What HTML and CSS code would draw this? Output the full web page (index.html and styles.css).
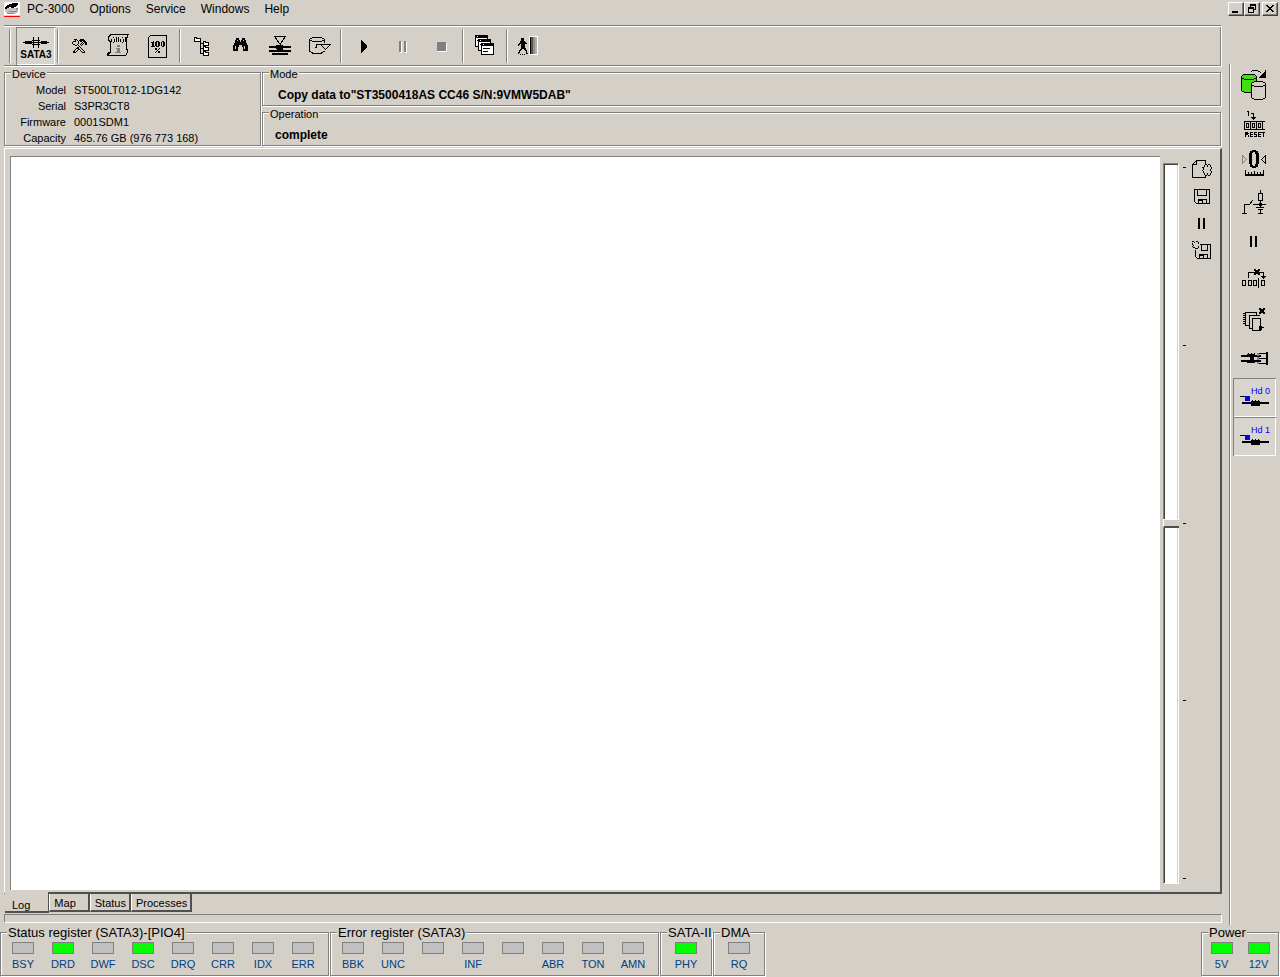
FILE: index.html
```html
<!DOCTYPE html>
<html lang="en">
<head>
<meta charset="utf-8">
<title>PC-3000</title>
<link rel="stylesheet" href="styles.css">
</head>
<body>
<header class="menubar">
  <svg class="app-icon" width="16" height="16" viewBox="0 0 16 16"><path fill="#fff" d="M0 0h16v13H0z"/><path fill="#c4c4c4" d="M1 6h13v4l-3 2H3L1 10z"/><path fill="#888" d="M5 9h8v1H5zM3 11h7v1H3zM12 6h2v2h-2z"/><path d="M1 7V5h1V4h1V3h2V2h3V1h6v2h-1v1h-1v1h-2v1H7V5H5v1H3v1z"/><path fill="red" d="M0 14h16v1H0z"/></svg>
  <nav class="menus" aria-label="Main menu">
    <button>PC-3000</button><button>Options</button><button>Service</button><button>Windows</button><button>Help</button>
  </nav>
  <div class="window-buttons">
    <button aria-label="Minimize"><svg width="12" height="10" viewBox="0 0 12 10"><path d="M2 7h6v2H2z"/></svg></button>
    <button aria-label="Restore"><svg width="12" height="10" viewBox="0 0 12 10"><path d="M4 0h6v6H8V5h1V2H5v1H4zM2 3h6v6H2zM3 5v3h4V5z" fill-rule="evenodd"/></svg></button>
    <button aria-label="Close"><svg width="12" height="10" viewBox="0 0 12 10"><path d="M2 1h2v1h1v1h2V2h1V1h2v1H9v1H8v1H7v1h1v1h1v1h1v1H8V7H7V6H5v1H4v1H2V7h1V6h1V5h1V4H4V3H3V2H2z"/></svg></button>
  </div>
</header>

<div class="workspace">
  <main class="main">
    <div class="toolbar" role="toolbar" aria-label="Tools">
      <span class="sep handle"></span>
      <button class="tool pressed" aria-label="SATA3"><svg viewBox="16 27 39 38"><path d="M23 42h26v1H23zM25 41h7v3h-7zM41 41h6v3h-6zM33 37h1v11h-1zM38 37h1v11h-1zM32 40h8v1h-8zM32 44h8v1h-8z"/><text class="sata-text" x="36" y="58">SATA3</text></svg></button>
      <span class="sep"></span>
      <button class="tool" aria-label="Utilities"><svg viewBox="60 27 39 38"><path d="M74 39h3v1h-3zM77 40h1v1h-1zM78 41h1v3h-1zM72 42h1v2h-1zM73 44h2v1h-2zM73 41h2v1h-2zM75 40h1v2h-1zM75 45h2v1h-2zM77 44h1v1h-1zM80 39h4v1h-4zM79 40h6v1h-6zM80 41h2v1h-2zM83 41h3v1h-3zM84 42h3v1h-3zM85 43h2v2h-2zM78 45h1v1h-1zM79 46h1v1h-1zM80 47h1v1h-1zM81 48h1v1h-1zM82 49h1v1h-1zM83 50h1v1h-1zM84 51h1v2h-1zM82 52h2v1h-2zM81 51h1v1h-1zM80 50h1v1h-1zM79 49h1v1h-1zM77 47h2v2h-2zM82 42h1v1h-1zM81 43h1v1h-1zM80 44h1v1h-1zM83 43h1v1h-1zM82 44h1v1h-1zM81 45h1v1h-1zM76 48h1v1h-1zM75 49h1v1h-1zM74 50h1v1h-1zM73 51h2v2h-2zM75 52h1v1h-1zM76 51h1v1h-1zM77 50h1v1h-1zM78 49h1v1h-1z"/></svg></button>
      <button class="tool" aria-label="Resources"><svg viewBox="99 27 39 38"><path class="ln" d="M128.500 34.500h-17l-2 1-1 2v3l2 1v10l-1 2-2 1v1h18l2-3v-2l-1-2V39l1-3zM107.500 54.500l1-2M110.500 55.500h14"/><path class="ln" d="M111.500 38.500v3m1-4h1m1 1v3m-2 1h1M116.500 37v5M118.500 37v5M120.500 38.500v3m1-4h1m1 1v3m-2 1h1M125.500 37v5"/><path fill="#808080" d="M117 45h3v2h-3zM116 48h4v4h1v1h-6v-1h2v-3h-1z"/></svg></button>
      <button class="tool" aria-label="Percent test"><svg viewBox="138 27 39 38"><path class="ln" d="M150.500 35.500h16v22h-18v-20z"/><path d="M151 42h2v-1h1v5h1v1h-4v-1h1v-3h-1zM156 41h3v1h1v4h-1v1h-3v-1h-1v-4h1zM157 42v4h1v-4zM162 41h2v1h1v4h-1v1h-2v-1h-1v-4h1zM162 42v4h1v-4zM155 48h2v2h-2zM159 48h1v1h-1v1h-1v1h-1v1h-1v1h-1v-1h1v-1h1v-1h1v-1h1zM158 51h2v2h-2z" fill-rule="evenodd"/></svg></button>
      <span class="sep"></span>
      <button class="tool" aria-label="Tree"><svg viewBox="182 27 39 38"><path fill="#fff" class="ln2" d="M194.500 41.500v-4h2v1h4v3zM203.500 45.500v-4h2v1h3v3zM203.500 50.500v-4h2v1h3v3zM203.500 55.500v-4h2v1h3v3z"/><path class="ln" d="M200.500 41.500v12h3M200.500 43.500h3M200.500 48.500h3"/></svg></button>
      <button class="tool" aria-label="Search"><svg viewBox="221 27 39 38"><path d="M236 38h3v2h1v2h1v-2h1v-2h3v2h1v3h1v2h1v6h-5v-4h-1v-2h-3v2h-1v4h-5v-6h1v-2h1v-3h1z"/><path fill="#d4d0c8" d="M237 40h1v1h-1zM243 40h1v1h-1zM235 46h1v3h-1zM244 46h1v3h-1z"/></svg></button>
      <button class="tool" aria-label="Filter"><svg viewBox="260 27 39 38"><path class="ln" d="M274.500 36.500h11l-5 7h-1zM280 43v4"/><path d="M269 46h22v2h-22zM269 50h22v2h-22zM272 53h16v2h-16zM276 45h7v4h-7zM277 48h6v3h-6z"/><path fill="#d4d0c8" d="M272 49h5v1h-5zM283 49h5v1h-5z"/></svg></button>
      <button class="tool" aria-label="Copy drive"><svg viewBox="299 27 39 38"><path class="ln" d="M309.500 39.500l3-2h9l3 2-3 2h-9zM309.500 40v11l3 2h9l3-2M324.500 40v3M316.500 44.500h5M316.500 44v3M316.500 47.500h-2M320.500 44.500h10l-5 5-5-5"/></svg></button>
      <span class="sep"></span>
      <button class="tool" aria-label="Start"><svg viewBox="343 27 39 38"><path d="M361 40h1v1h1v1h1v1h1v1h1v1h1v3h-1v1h-1v1h-1v1h-1v1h-1v1h-1z"/></svg></button>
      <button class="tool" aria-label="Pause" disabled><svg viewBox="382 27 39 38"><path fill="#fff" d="M400 42h2v11h-2zM405 42h2v11h-2z"/><path fill="#808080" d="M399 41h2v11h-2zM404 41h2v11h-2z"/></svg></button>
      <button class="tool" aria-label="Stop" disabled><svg viewBox="421 27 39 38"><path fill="#fff" d="M438 43h9v9h-9z"/><path fill="#808080" d="M437 42h9v9h-9z"/></svg></button>
      <span class="sep"></span>
      <button class="tool" aria-label="Cascade windows"><svg viewBox="465 27 39 38"><path fill="#fff" class="ln2" d="M475.500 35.500h12v11h-12z"/><path d="M475 35h13v3h-13zM477 40h2v1h-2z"/><path fill="#fff" class="ln2" d="M478.500 39.500h12v11h-12z"/><path d="M478 39h13v3h-13zM480 44h2v1h-2z"/><path fill="#fff" class="ln2" d="M481.500 43.500h12v11h-12z"/><path d="M481 43h13v3h-13zM483 48h7v1h-7zM483 51h5v1h-5z"/><path fill="#fff" d="M477 36h1v1h-1zM480 40h1v1h-1zM483 44h1v1h-1z"/></svg></button>
      <span class="sep"></span>
      <button class="tool" aria-label="Exit"><svg viewBox="509 27 39 38"><path d="M521 38h3v3h-3zM520 41h5v1h1v1h1v1h-2v4h1v2h1v3h1v1h-2v-3h-1v-1h-1v-1h-2v1h-1v1h-1v2h-1v1h-1v-2h1v-2h1v-1h1v-5h-1v1h-1v1h-1v-2h1v-1h1zM520 54h1v1h-1zM522 54h1v1h-1zM524 54h1v1h-1z"/><path fill="#fff" d="M529 36h9v19h-9z"/><path d="M530 37h1v17h-1z"/><path fill="#555" d="M531 37h2v17h-2z"/><path fill="#909090" d="M533 37h2v17h-2z"/><path fill="#b0b0b0" d="M535 37h2v17h-2z"/></svg></button>
    </div>

    <div class="info">
      <fieldset class="group device">
        <legend>Device</legend>
        <dl>
          <dt>Model</dt><dd>ST500LT012-1DG142</dd>
          <dt>Serial</dt><dd>S3PR3CT8</dd>
          <dt>Firmware</dt><dd>0001SDM1</dd>
          <dt>Capacity</dt><dd>465.76 GB (976 773 168)</dd>
        </dl>
      </fieldset>
      <fieldset class="group mode"><legend>Mode</legend><p>Copy data to"ST3500418AS CC46 S/N:9VMW5DAB"</p></fieldset>
      <fieldset class="group operation"><legend>Operation</legend><p>complete</p></fieldset>
    </div>

    <section class="panel" aria-label="Log panel">
      <div class="log" role="log"></div>
      <input class="slider" type="range" min="0" max="4" value="2" aria-label="Log detail">
      <div class="ticks"><i></i><i></i><i></i><i></i><i></i></div>
      <div class="log-tools">
        <button aria-label="New log"><svg viewBox="1190 156 24 27"><path class="ln" d="M1205.500 164v-3.500h-9l-4 4v13h13v-2M1192.500 164.500h4v-4"/><path d="M1205 164h2v1h-2zM1208 164h2v1h-2zM1204 165h1v2h-1zM1207 165h1v2h-1zM1210 165h1v2h-1zM1202 167h2v1h-2zM1211 167h1v2h-1zM1203 168h1v2h-1zM1202 170h1v1h-1zM1210 169h1v2h-1zM1203 171h1v2h-1zM1211 171h1v2h-1zM1204 173h1v2h-1zM1210 173h1v2h-1zM1205 175h2v1h-2zM1207 173h1v2h-1zM1208 175h2v1h-2z"/></svg></button>
        <button aria-label="Save log"><svg viewBox="1190 183 24 27"><path class="ln" d="M1194.500 189.500h15v14h-13l-2-2zM1197.500 190v5h9v-5M1198.500 203v-4h8v4M1199 200.500h3v2"/></svg></button>
        <button aria-label="Pause log"><svg viewBox="1190 210 24 27"><path d="M1198 218h2v11h-2zM1203 218h2v11h-2z"/></svg></button>
        <button aria-label="Save log as"><svg viewBox="1190 237 24 27"><path class="ln" d="M1199.500 244.500h11v14h-13l-2-2v-7M1201.500 245v5h6v-5M1199.500 258v-4h8v4M1200 255.500h3v2"/><path d="M1192 241h2v1h-2zM1194 242h1v1h-1zM1196 241h2v1h-2zM1198 242h1v2h-1zM1192 243h1v2h-1zM1193 245h1v1h-1zM1192 246h1v1h-1zM1193 247h2v1h-2zM1195 248h3v1h-3zM1198 246h1v2h-1z"/></svg></button>
      </div>
    </section>

    <div class="tabs" role="tablist">
      <button role="tab" aria-selected="true" class="tab active">Log</button>
      <button role="tab" class="tab">Map</button>
      <button role="tab" class="tab">Status</button>
      <button role="tab" class="tab">Processes</button>
    </div>
    <div class="progress"></div>
  </main>

  <aside class="sidebar">
    <button aria-label="Copy"><svg viewBox="1233 66 43 39"><path fill="#40e010" class="ln2" d="M1241.500 76.500l2-2h11l2 2v14l-3 2h-9l-3-2z"/><path class="ln" d="M1241.500 77.500l3 2h9l3-2M1250.500 72.500l2-2h5l3 2 1 1"/><path d="M1266 70v8h-7v-1h1v-1h1v-1h1v-1h1v-1h1v-1h1v-2z"/><path fill="#d4d0c8" class="ln2" d="M1251.500 83.500l3-2h8l3 2v14l-3 2h-8l-3-2z"/><path class="ln" d="M1251.500 84.500l3 2h8l3-2"/></svg></button>
    <button aria-label="Reset"><svg viewBox="1233 105 43 39"><path d="M1247 111h2v5h-1v-4h-1zM1251 113h3v4h2v1h-1v1h-1v1h-1v-1h-1v-1h-1v-1h2v-3h-2z"/><path class="ln" d="M1265 121.500h-20.500v8H1265M1250.500 121v9M1256.500 121v9M1262.500 121v9"/><path fill-rule="evenodd" d="M1246 123h3v5h-3zM1247 124v3h1v-3zM1252 123h3v5h-3zM1253 124v3h1v-3zM1258 123h3v5h-3zM1259 124v3h1v-3z"/><path d="M1245 132h3v1h1v1h-1v1h1v2h-1v-2h-2v2h-1zM1250 132h3v1h-2v1h2v1h-2v1h2v1h-3zM1254 132h3v1h-2v1h2v3h-3v-1h2v-1h-2zM1258 132h3v1h-2v1h2v1h-2v1h2v1h-3zM1261 132h4v1h-1v4h-1v-4h-2z"/></svg></button>
    <button aria-label="Recalibrate"><svg viewBox="1233 144 43 39"><path fill-rule="evenodd" d="M1252 150h4v1h2v2h1v11h-1v3h-2v1h-4v-1h-2v-3h-1v-11h1v-2h2zM1253 152l-1 3v8l1 3h2l1-3v-8l-1-3z"/><path d="M1245 174h19v2h-19zM1245 170h1v4h-1zM1248 172h1v2h-1zM1251 172h1v2h-1zM1254 171h1v3h-1zM1257 172h1v2h-1zM1260 172h1v2h-1zM1263 170h1v4h-1z"/><path class="ln" d="M1265.500 155.500v8l-4-4z"/><path class="ln grey" d="M1242.500 155.500v8l4-4z"/></svg></button>
    <button aria-label="Power switch"><svg viewBox="1233 183 43 39"><path class="ln" d="M1242 213.500h5M1244.500 213v-8.500h5l3-4M1253 204.500h13M1260.500 190v3M1258.500 193.500h4v7h-4zM1260.500 200v7M1256 207.500h8M1258 209.500h5M1260.500 209v5M1258 213.500h5"/><path d="M1259 203h3v3h-3z"/></svg></button>
    <button aria-label="Pause"><svg viewBox="1233 222 43 39"><path d="M1250 236h2v11h-2zM1255 236h2v11h-2z"/></svg></button>
    <button aria-label="Skip block"><svg viewBox="1233 261 43 39"><path class="ln" d="M1242.500 280.500h3v5h-3zM1248.500 280.500h3v5h-3zM1253.500 280.500h3v5h-3zM1261.500 280.500h3v5h-3zM1258.500 278v10M1248.500 278v-5.500h15v4"/><path d="M1254 269h2v1h2v-1h2v2h-1v2h1v2h-2v-1h-2v1h-2v-2h1v-2h-1zM1261 276h5v1h-1v1h-1v1h-1v-1h-1v-1h-1z"/></svg></button>
    <button aria-label="Clear heads"><svg viewBox="1233 300 43 39"><path class="ln" d="M1256 312.500h-10.500v13h3M1260 315.500h-10.500v13h3M1252.500 318.500h8v12h-8zM1256.500 312v3M1243 313.500h3M1243 315.500h3M1243 317.500h3M1243 319.500h3M1243 321.500h3M1243 323.500h3"/><path d="M1259 308h2v1h2v-1h2v2h-1v2h1v2h-2v-1h-2v1h-2v-2h1v-2h-1zM1259 326h3v1h2v1h-2v2h-3z"/></svg></button>
    <button aria-label="Head stack"><svg viewBox="1233 339 43 39"><path d="M1241 355h20v2h-20zM1241 360h20v2h-20zM1247 354h8v3h-8zM1250 356h4v6h-4zM1247 360h8v3h-8zM1248 353h1v1h-1zM1251 353h1v1h-1zM1254 353h1v1h-1zM1266 352h2v13h-2z"/><path class="ln" d="M1257 353.500h9M1257 358.500h9M1257 363.500h9"/><path fill="#808080" d="M1257 353h2v3h-2zM1257 357h2v3h-2zM1257 362h2v2h-2z"/></svg></button>
    <button class="pressed" aria-label="Head 0"><svg viewBox="1233 378 43 39"><text class="hd-text" x="1251" y="394">Hd 0</text><path d="M1240 396h5v1h-5zM1242 402h27v2h-27zM1251 401h9v5h-9zM1252 400h1v1h-1zM1255 400h1v1h-1zM1258 400h1v1h-1z"/><path fill="#00f" d="M1245 396h5v5h-5z"/></svg></button>
    <button class="pressed" aria-label="Head 1"><svg viewBox="1233 417 43 39"><text class="hd-text" x="1251" y="433">Hd 1</text><path d="M1240 435h5v1h-5zM1242 441h27v2h-27zM1251 440h9v5h-9zM1252 439h1v1h-1zM1255 439h1v1h-1zM1258 439h1v1h-1z"/><path fill="#00f" d="M1245 435h5v5h-5z"/></svg></button>
  </aside>
</div>

<footer class="registers">
  <fieldset class="group leds"><legend>Status register (SATA3)-[PIO4]</legend>
    <div><span class="led"></span>BSY</div><div><span class="led on"></span>DRD</div><div><span class="led"></span>DWF</div><div><span class="led on"></span>DSC</div><div><span class="led"></span>DRQ</div><div><span class="led"></span>CRR</div><div><span class="led"></span>IDX</div><div><span class="led"></span>ERR</div>
  </fieldset>
  <fieldset class="group leds"><legend>Error register (SATA3)</legend>
    <div><span class="led"></span>BBK</div><div><span class="led"></span>UNC</div><div><span class="led"></span></div><div><span class="led"></span>INF</div><div><span class="led"></span></div><div><span class="led"></span>ABR</div><div><span class="led"></span>TON</div><div><span class="led"></span>AMN</div>
  </fieldset>
  <fieldset class="group leds single"><legend>SATA-II</legend><div><span class="led on"></span>PHY</div></fieldset>
  <fieldset class="group leds single"><legend>DMA</legend><div><span class="led"></span>RQ</div></fieldset>
  <fieldset class="group leds power"><legend>Power</legend><div><span class="led on"></span>5V</div><div><span class="led on"></span>12V</div></fieldset>
</footer>
</body>
</html>
```
FILE: styles.css
```css
* { box-sizing: border-box; }

body {
  margin: 0;
  min-height: 100vh;
  display: flex;
  flex-direction: column;
  background: #d4d0c8;
  color: #000;
  font: 11px/12px "Liberation Sans", Arial, sans-serif;
}

button {
  margin: 0;
  padding: 0;
  border: 0;
  background: none;
  color: inherit;
  font: inherit;
}

svg { display: block; shape-rendering: crispEdges; }
.ln { fill: none; stroke: #000; stroke-width: 1; }
.ln2 { stroke: #000; stroke-width: 1; }
.grey { stroke: #808080; }

/* Menu bar */
.menubar { display: flex; height: 25px; padding: 2px 2px 0 4px; }
.menus { display: flex; gap: 15px; margin-left: 7px; height: 14px; font-size: 12px; line-height: 14px; }
.window-buttons { display: flex; margin-left: auto; }
.window-buttons button {
  width: 16px;
  height: 14px;
  padding: 1px;
  border: 1px solid;
  border-color: #fff #404040 #404040 #fff;
  box-shadow: inset -1px -1px 0 #808080;
}
.window-buttons button:last-child { margin-left: 2px; }

/* Work area */
.workspace { display: flex; flex: 1; gap: 7px; }
.main { flex: 1; display: flex; flex-direction: column; min-width: 0; padding-left: 4px; }

.toolbar {
  display: flex;
  height: 42px;
  padding: 1px 0 0 4px;
  border-top: 1px solid #808080;
  border-bottom: 1px solid #fff;
  border-right: 1px solid #fff;
  box-shadow: inset 0 1px 0 #fff, inset -1px -1px 0 #808080;
}
.sep {
  width: 2px;
  height: 34px;
  margin: 2px 1px 0 2px;
  border-left: 1px solid #808080;
  border-right: 1px solid #fff;
}
.handle { margin: 2px 5px 0 1px; }
.tool { width: 39px; height: 38px; }
.tool svg { width: 39px; height: 38px; }
.pressed {
  background: #d8d5ce;
  box-shadow: inset 1px 1px 0 #808080, inset -1px -1px 0 #fff;
}
.sata-text { font: bold 10px "Liberation Sans", Arial, sans-serif; text-anchor: middle; }
.hd-text { font: 9px "Liberation Sans", Arial, sans-serif; fill: #00f; }

/* Etched group boxes */
.group {
  margin: 0;
  padding: 0;
  min-width: 0;
  border: 1px solid #808080;
  box-shadow: inset 1px 1px 0 #fff, 1px 1px 0 #fff;
}
.group legend { margin-left: 6px; padding: 0 1px; background: #d4d0c8; white-space: nowrap; }

.info {
  display: grid;
  grid-template-columns: 257px 1fr;
  grid-template-rows: 39px 39px;
  gap: 1px;
  padding-right: 1px;
}
.info legend { height: 10px; line-height: 14px; }
.device { grid-row: span 2; }
.device dl {
  display: grid;
  grid-template-columns: 61px 1fr;
  column-gap: 8px;
  margin: 5px 0 0;
  line-height: 16px;
}
.device dt { text-align: right; }
.device dd { margin: 0; }
.info p { margin: 12px 0 0 15px; font-weight: bold; font-size: 12px; }
.info .operation p { margin-left: 12px; }

/* Log panel */
.panel {
  flex: 1;
  display: flex;
  margin-top: 2px;
  padding: 7px 6px 2px 5px;
  border: 1px solid #fff;
  border-right: 2px solid #505050;
  border-bottom: 2px solid #505050;
}
.log {
  flex: 1;
  background: #fff;
  border-top: 1px solid #808080;
  border-left: 1px solid #808080;
}
.slider {
  appearance: none;
  writing-mode: vertical-lr;
  width: 16px;
  height: auto;
  margin: 7px 0 6px 3px;
  background: #fff;
  border: 1px solid;
  border-color: #808080 #fff #fff #808080;
  box-shadow: inset 1px 1px 0 #404040, inset -1px 0 0 #d4d0c8;
}
.slider::-webkit-slider-thumb {
  appearance: none;
  width: 16px;
  height: 9px;
  background: #d4d0c8;
  border: 1px solid #fff;
  border-right: 0;
  border-bottom: 2px solid #505050;
}
.ticks {
  display: flex;
  flex-direction: column;
  justify-content: space-between;
  width: 3px;
  margin: 11px 0 11px 4px;
}
.ticks i { height: 1px; background: #000; }
.log-tools { margin-left: 4px; }
.log-tools button { display: block; width: 24px; height: 27px; }
.log-tools svg { width: 24px; height: 27px; }

.tabs { display: flex; align-items: flex-start; height: 20px; padding-left: 1px; }
.tab {
  height: 18px;
  padding: 2px 3px 0 4px;
  border-left: 1px solid #fff;
  border-right: 2px solid #505050;
  border-bottom: 2px solid #505050;
}
.tab.active {
  position: relative;
  height: 21px;
  margin-top: -2px;
  padding: 6px 18px 0 7px;
  border-left: 0;
  border-right-width: 1px;
  background: #d4d0c8;
}
.tab:nth-child(2) { padding-right: 12px; }
.progress {
  height: 9px;
  margin-bottom: 2px;
  border: 1px solid;
  border-color: #808080 #fff #fff #808080;
}

/* Right sidebar */
.sidebar {
  margin-top: 39px;
  padding: 2px 4px 0 2px;
  border-left: 1px solid #808080;
  box-shadow: inset 1px 0 0 #fff;
}
.sidebar button { display: block; width: 43px; height: 39px; margin-left: 1px; }
.sidebar svg { width: 43px; height: 39px; }

/* Register indicators */
.registers { display: flex; gap: 1px; height: 52px; padding: 0 1px 1px 0; }
.leds { display: flex; padding: 0 5px 0 2px; color: #004080; }
.leds legend { margin-left: 4px; color: #000; font-size: 13px; line-height: 16px; height: 14px; }
.leds div { width: 40px; text-align: center; padding-top: 3px; }
.led {
  display: block;
  width: 22px;
  height: 12px;
  margin: 0 auto 4px;
  background: #c0c0c0;
  border: 1px solid #808080;
}
.led.on { background: #0f0; }
.single { width: 52px; padding: 0; justify-content: center; }
.single legend { margin-left: 6px; padding-right: 0; }
.power { margin-left: auto; padding: 0 1px; }
.power legend { margin-left: 5px; }
.power div { width: 37px; }
```
